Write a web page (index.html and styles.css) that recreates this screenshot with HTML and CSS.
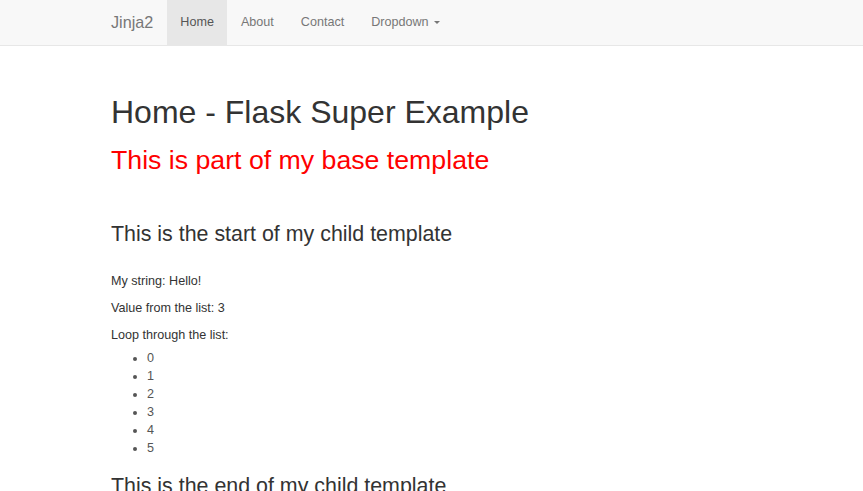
FILE: index.html
```html
<!DOCTYPE html>
<html lang="en">
<head>
<meta charset="utf-8">
<title>Home - Flask Super Example</title>
<link rel="stylesheet" href="styles.css">
</head>
<body>
<nav class="navbar">
  <div class="container navbar-inner">
    <a class="brand" href="#">Jinja2</a>
    <ul class="nav">
      <li class="active"><a href="#">Home</a></li>
      <li><a href="#">About</a></li>
      <li><a href="#">Contact</a></li>
      <li><a href="#">Dropdown <span class="caret"></span></a></li>
    </ul>
  </div>
</nav>
<main class="container content">
  <h1 class="title">Home - Flask Super Example</h1>
  <h2 class="base">This is part of my base template</h2>
  <h3 class="child-start">This is the start of my child template</h3>
  <p>My string: Hello!</p>
  <p>Value from the list: 3</p>
  <p class="loop">Loop through the list:</p>
  <ul class="items">
    <li>0</li>
    <li>1</li>
    <li>2</li>
    <li>3</li>
    <li>4</li>
    <li>5</li>
  </ul>
  <h3 class="child-end">This is the end of my child template</h3>
</main>
</body>
</html>
```
FILE: styles.css
```css
html, body {
  margin: 0;
  padding: 0;
}
body {
  font-family: "Liberation Sans", Arial, sans-serif;
  font-size: 12.6px;
  line-height: 18px;
  color: #333;
  background: #fff;
}
.container {
  box-sizing: border-box;
  width: 668px;
  margin: 0 auto;
  padding: 0 13.5px;
}
.navbar {
  background: #f8f8f8;
  border-bottom: 1px solid #e7e7e7;
  height: 46px;
  box-sizing: border-box;
}
.navbar-inner {
  display: flex;
  align-items: stretch;
  height: 100%;
}
.brand {
  display: block;
  margin-left: -13.5px;
  padding: 0 13.5px;
  font-size: 16.2px;
  line-height: 45px;
  color: #777;
  text-decoration: none;
}
.nav {
  display: flex;
  list-style: none;
  margin: 0;
  padding: 0;
}
.nav li a {
  display: block;
  padding: 0 13.5px;
  line-height: 45px;
  color: #777;
  text-decoration: none;
}
.nav li.active a {
  background: #e7e7e7;
  color: #555;
}
.caret {
  display: inline-block;
  width: 0;
  height: 0;
  margin-left: 2px;
  vertical-align: middle;
  border-top: 3.6px solid #777;
  border-left: 3.6px solid transparent;
  border-right: 3.6px solid transparent;
}
.content {
  padding-top: 49px;
}
h1, h2, h3 {
  font-weight: 500;
  line-height: 1.1;
  color: #333;
}
.title {
  font-size: 32px;
  margin: 0 0 9px;
}
.base {
  font-size: 26.7px;
  color: #f00;
  margin: 16px 0 9px;
}
.child-start {
  font-size: 21.4px;
  margin: 47px 0 26px;
}
p {
  margin: 0 0 9px;
}
p.loop {
  margin-bottom: 5px;
}
.items {
  margin: 0 0 9px;
  padding-left: 36px;
  color: #555;
}
.child-end {
  font-size: 21.4px;
  margin: 18px 0 9px;
}
```
